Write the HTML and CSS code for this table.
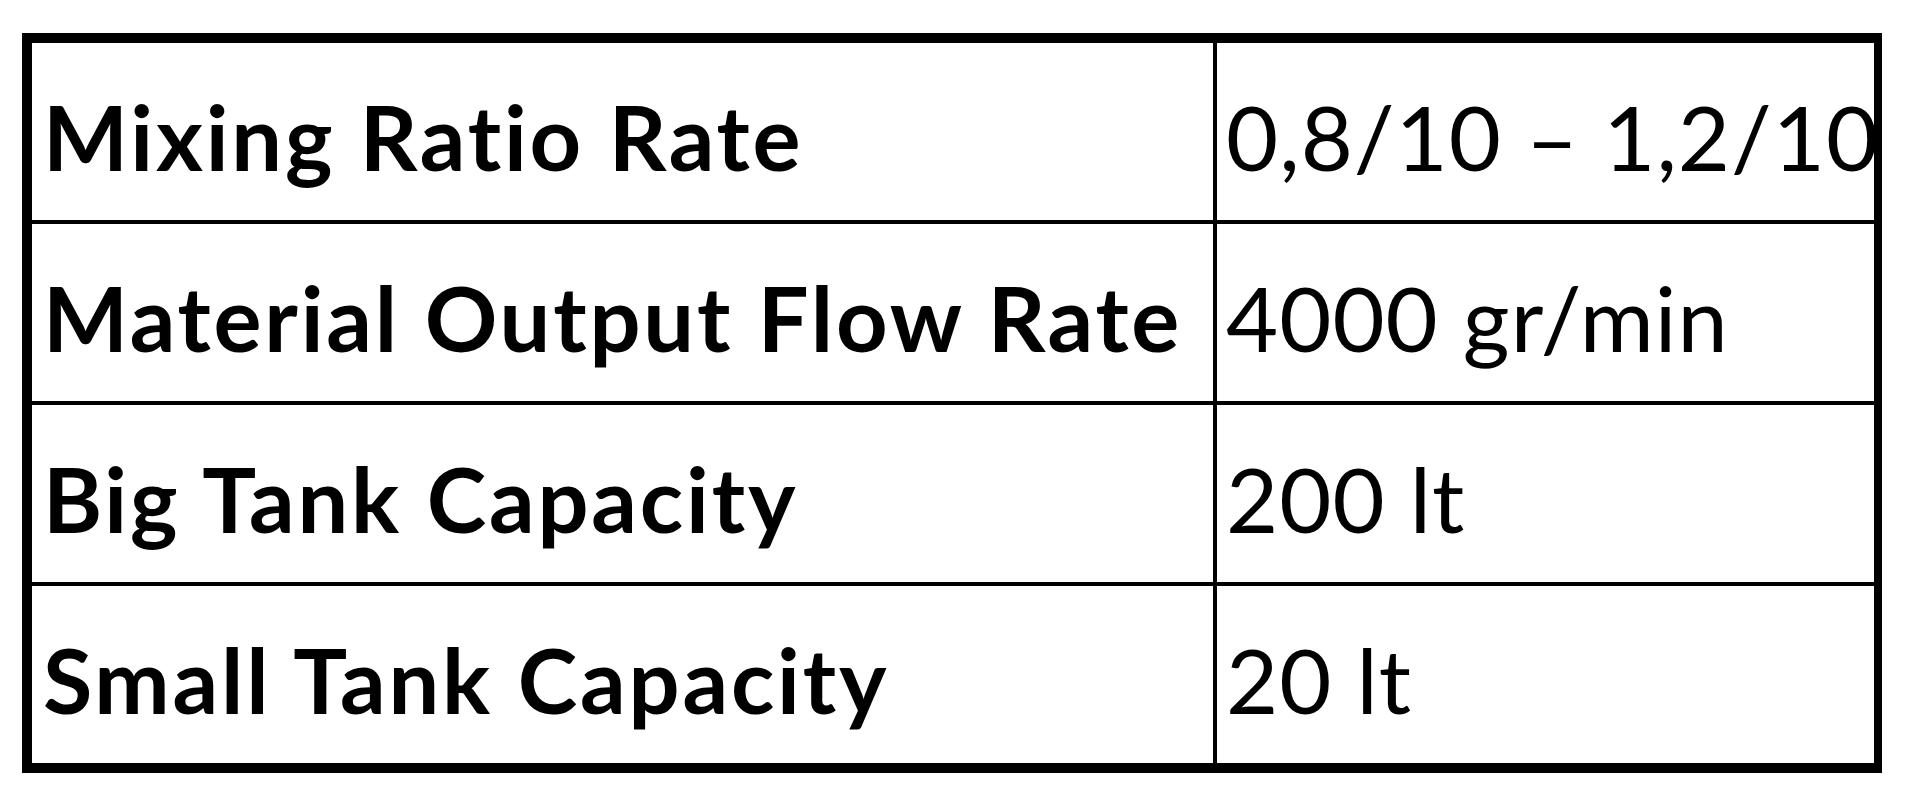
FILE: index.html
```html
<!DOCTYPE html>
<html lang="en">
<head>
  <meta charset="UTF-8" />
  <meta name="viewport" content="width=device-width, initial-scale=1.0" />
  <title>Specifications</title>
  <link rel="stylesheet" href="styles.css">
</head>
<body>

  <table class="spec-table">
    <tr>
      <th>Mixing Ratio Rate</th>
      <td>0,8/10 – 1,2/10</td>
    </tr>
    <tr>
      <th>Material Output Flow Rate</th>
      <td>4000 gr/min</td>
    </tr>
    <tr>
      <th>Big Tank Capacity</th>
      <td>200 lt</td>
    </tr>
    <tr>
      <th>Small Tank Capacity</th>
      <td>20 lt</td>
    </tr>
  </table>

</body>
</html>
```

FILE: styles.css
```css
* {
  box-sizing: border-box;
}

body {
  margin: 0;
  padding: 33px 0 0 22px;
  background: #fff;
  color: #000;
  font-family: Lato, "Open Sans", sans-serif;
  font-variant-ligatures: none;
}

.spec-table {
  border-collapse: separate;
  border-spacing: 0;
  border: 10px solid #000;
  border-right-width: 8px;
  width: 1860px;
  table-layout: fixed;
}

.spec-table th,
.spec-table td {
  height: 181px;
  padding: 8px 8px 0 11px;
  border-bottom: 4px solid #000;
  font-size: 90px;
  line-height: 1;
  text-align: left;
  vertical-align: middle;
  white-space: nowrap;
}

.spec-table tr:last-child th,
.spec-table tr:last-child td {
  height: 177px;
  border-bottom: none;
}

.spec-table th {
  width: 1185px;
  font-weight: bold;
  letter-spacing: 2.8px;
  border-right: 4px solid #000;
}

.spec-table td {
  font-weight: normal;
  letter-spacing: 1px;
  padding-left: 9px;
}
```
